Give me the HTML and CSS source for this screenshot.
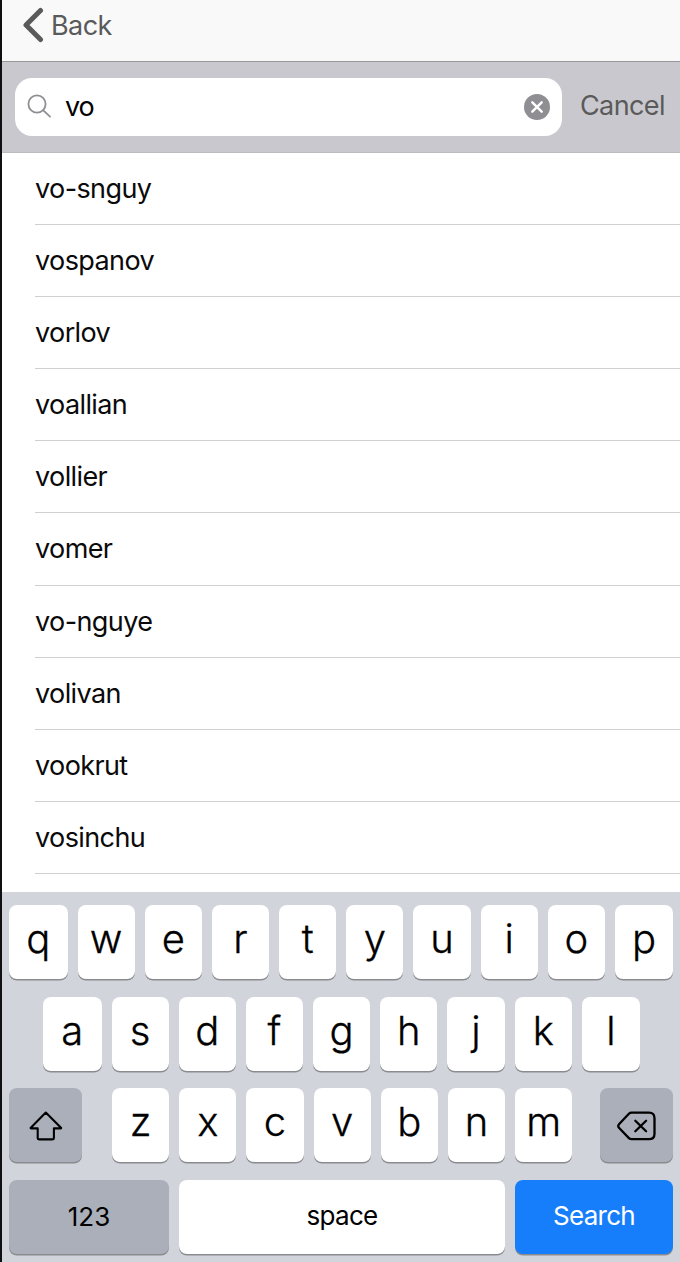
FILE: index.html
```html
<!DOCTYPE html>
<html lang="en">
<head>
<meta charset="utf-8">
<meta name="viewport" content="width=device-width">
<title>Search</title>
<link rel="stylesheet" href="styles.css">
</head>
<body>
<main class="screen">
  <header class="navbar">
    <svg class="chevron" viewBox="0 0 22 36"><path d="M18.5 3.5 4 18l14.500 14.500"/></svg>
    <span class="back">Back</span>
  </header>
  <section class="searchbar">
    <div class="field">
      <svg class="glass" viewBox="0 0 26 26"><circle cx="10" cy="10" r="8.6"/><path d="m16.300 16.400 6.700 6.300"/></svg>
      <span class="query">vo</span>
      <svg class="clear" viewBox="0 0 26 26"><circle cx="13" cy="13" r="13"/><path d="m8.300 8.300 9.400 9.400m0-9.400-9.400 9.400"/></svg>
    </div>
    <span class="cancel">Cancel</span>
  </section>
  <ul class="results">
    <li>vo-snguy</li>
    <li>vospanov</li>
    <li>vorlov</li>
    <li>voallian</li>
    <li>vollier</li>
    <li>vomer</li>
    <li>vo-nguye</li>
    <li>volivan</li>
    <li>vookrut</li>
    <li>vosinchu</li>
  </ul>
  <section class="keyboard">
    <div class="row">
      <span class="key first">q</span><span class="key">w</span><span class="key">e</span><span class="key">r</span><span class="key">t</span><span class="key">y</span><span class="key">u</span><span class="key">i</span><span class="key">o</span><span class="key last">p</span>
    </div>
    <div class="row home">
      <span class="key first">a</span><span class="key">s</span><span class="key">d</span><span class="key">f</span><span class="key">g</span><span class="key">h</span><span class="key">j</span><span class="key">k</span><span class="key last">l</span>
    </div>
    <div class="row">
      <span class="key dark shift"><svg class="shift-icon" viewBox="0 0 34 30"><path d="M16.800 1.500 32 16.700q.5.700-.4.700h-6.700v9.400q0 1.600-1.600 1.600H10.300q-1.600 0-1.600-1.600v-9.400H2.200q-.9 0-.4-.7z"/></svg></span>
      <span class="key">z</span><span class="key">x</span><span class="key">c</span><span class="key">v</span><span class="key">b</span><span class="key">n</span><span class="key">m</span>
      <span class="key dark delete"><svg class="delete-icon" viewBox="0 0 40 30"><path d="M14.500 1.700H32q5.500 0 5.500 5.500v15.500q0 5.500-5.500 5.500H14.500q-1.500 0-2.600-1.100L2.200 17q-1.900-2 0-4l9.700-10.200q1.100-1.100 2.600-1.100z"/><path d="m18.300 9.700 10.800 10.600m0-10.600-10.800 10.600"/></svg></span>
    </div>
    <div class="row">
      <span class="key dark word numbers">123</span>
      <span class="key word space">space</span>
      <span class="key word search">Search</span>
    </div>
  </section>
</main>
</body>
</html>
```
FILE: styles.css
```css
* { box-sizing: border-box; }
body { margin: 0; font-family: Inter, "Liberation Sans", sans-serif; background: #fff; }
svg { display: block; fill: none; stroke-linecap: round; stroke-linejoin: round; flex: none; }
.screen { width: 680px; height: 1262px; overflow: hidden; border-left: 2px solid #101012; display: flex; flex-direction: column; }

.navbar { height: 62px; flex: none; display: flex; align-items: flex-start; padding: 7px 0 0 20px; background: #f9f9f9; border-bottom: 1px solid #98989b; color: #5a5a5a; }
.chevron { width: 22px; height: 36px; stroke: #5a5a5a; stroke-width: 5; }
.back { font-size: 27px; line-height: 38px; margin-left: 7px; letter-spacing: -0.6px; }

.searchbar { height: 91px; flex: none; display: flex; align-items: flex-start; padding: 16px 0 0 13px; background: #c9c8ce; border-bottom: 1px solid #bcbcc0; }
.field { width: 547px; height: 58px; border-radius: 17px; background: #fff; display: flex; align-items: center; padding: 0 12px; }
.glass { width: 26px; height: 26px; stroke: #8e8e93; stroke-width: 1.8; }
.query { flex: 1; font-size: 27px; margin-left: 12px; line-height: 58px; letter-spacing: -1.2px; }
.clear { width: 26px; height: 26px; }
.clear circle { fill: #8e8e93; }
.clear path { stroke: #fff; stroke-width: 2.4; }
.cancel { font-size: 27px; line-height: 56px; margin-left: 18px; color: #5a5a5a; letter-spacing: -0.6px; }

.results { margin: 0; padding: 0 0 0 33px; list-style: none; height: 739px; flex: none; }
.results li { height: 72.1px; line-height: 72px; border-bottom: 1px solid #d0d0d3; font-size: 27px; color: #0a0a0a; letter-spacing: -0.6px; }

.keyboard { flex: 1; padding: 13px 7px 0; background: #d1d4da; display: flex; flex-direction: column; gap: 17.7px; }
.row { height: 74px; flex: none; display: flex; gap: 10px; }
.home { padding-left: 34px; }
.key { width: 57.2px; height: 74px; flex: none; border-radius: 8px; background: #fff; box-shadow: 0 1.5px 0 #898b8f; display: flex; align-items: center; justify-content: center; font-size: 40px; font-weight: 300; line-height: 68px; padding-bottom: 6px; color: #000; -webkit-text-stroke: 0.3px #000; }
.first { width: 58.5px; }
.last { width: 58px; }
.dark { background: #abafb9; }
.shift { width: 73px; margin-right: 20px; padding: 1px 0 0 1px; }
.delete { width: 73px; margin-left: 18px; padding: 1px 0 0; }
.shift-icon { width: 34px; height: 30px; stroke: #000; stroke-width: 2.1; }
.delete-icon { width: 40px; height: 30px; stroke: #000; stroke-width: 2.3; }
.word { font-size: 26px; font-weight: 400; padding-bottom: 2px; letter-spacing: -0.7px; -webkit-text-stroke: 0; }
.numbers { width: 160px; padding-bottom: 0; letter-spacing: 0; }
.space { width: 326px; }
.search { width: 158px; background: #167efb; color: #fff; }
```
